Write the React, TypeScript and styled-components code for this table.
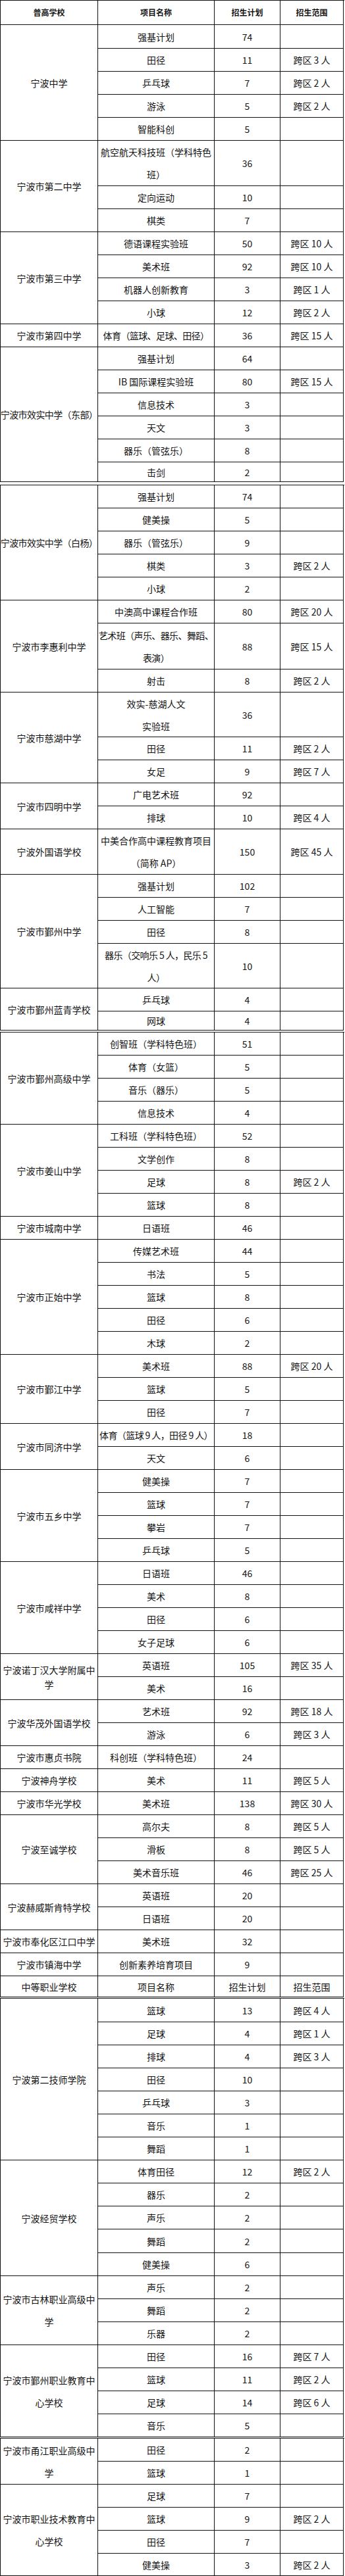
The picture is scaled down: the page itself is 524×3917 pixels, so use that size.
import React from "react";
import styled, { createGlobalStyle } from "styled-components";

type Item = { name: React.ReactNode; plan: string; range?: string; h?: number; tight?: boolean };
type Group = { kind: "group"; school: string; items: Item[]; lh?: number; tight?: boolean };
type Head = { kind: "head"; labels: string[]; bold: boolean; h: number };
type Block = Group | Head;
type Segment = { blocks: Block[]; gap: number };

const g = (school: string, items: Item[], extra: Partial<Group> = {}): Group => ({ kind: "group", school, items, ...extra });
const i = (name: React.ReactNode, plan: string, range?: string, h?: number, tight?: boolean): Item => ({ name, plan, range, h, tight });

const segments: Segment[] = [
  {
    gap: 0,
    blocks: [
      { kind: "head", labels: ["普高学校", "项目名称", "招生计划", "招生范围"], bold: true, h: 37 },
      g("宁波中学", [
        i("强基计划", "74", undefined, 36),
        i("田径", "11", "跨区 3 人"),
        i("乒乓球", "7", "跨区 2 人"),
        i("游泳", "5", "跨区 2 人"),
        i("智能科创", "5"),
      ]),
      g("宁波市第二中学", [
        i(<>航空航天科技班（学科特色<br />班）</>, "36", undefined, 69),
        i("定向运动", "10"),
        i("棋类", "7"),
      ]),
      g("宁波市第三中学", [
        i("德语课程实验班", "50", "跨区 10 人"),
        i("美术班", "92", "跨区 10 人"),
        i("机器人创新教育", "3", "跨区 1 人"),
        i("小球", "12", "跨区 2 人"),
      ]),
      g("宁波市第四中学", [i("体育（篮球、足球、田径）", "36", "跨区 15 人", undefined, true)]),
      g(
        "宁波市效实中学（东部）",
        [
          i("强基计划", "64"),
          i("IB 国际课程实验班", "80", "跨区 15 人"),
          i("信息技术", "3"),
          i("天文", "3"),
          i("器乐（管弦乐）", "8"),
          i("击剑", "2", undefined, 30),
        ],
        { tight: true }
      ),
    ],
  },
  {
    gap: 4,
    blocks: [
      g(
        "宁波市效实中学（白杨）",
        [
          i("强基计划", "74"),
          i("健美操", "5"),
          i("器乐（管弦乐）", "9"),
          i("棋类", "3", "跨区 2 人"),
          i("小球", "2"),
        ],
        { tight: true }
      ),
      g("宁波市李惠利中学", [
        i("中澳高中课程合作班", "80", "跨区 20 人"),
        i(<>艺术班（声乐、器乐、舞蹈、<br />表演）</>, "88", "跨区 15 人", 70, true),
        i("射击", "8", "跨区 2 人"),
      ]),
      g("宁波市慈湖中学", [
        i(<>效实-慈湖人文<br />实验班</>, "36", undefined, 68),
        i("田径", "11", "跨区 2 人"),
        i("女足", "9", "跨区 7 人"),
      ]),
      g("宁波市四明中学", [i("广电艺术班", "92"), i("排球", "10", "跨区 4 人")]),
      g("宁波外国语学校", [
        i(<>中美合作高中课程教育项目<br />（简称 AP）</>, "150", "跨区 45 人", 69),
      ]),
      g("宁波市鄞州中学", [
        i("强基计划", "102"),
        i("人工智能", "7"),
        i("田径", "8"),
        i(<>器乐（交响乐 5 人，民乐 5<br />人）</>, "10", undefined, 68, true),
      ]),
      g("宁波市鄞州蓝青学校", [i("乒乓球", "4"), i("网球", "4", undefined, 29)]),
    ],
  },
  {
    gap: 2,
    blocks: [
      g("宁波市鄞州高级中学", [
        i("创智班（学科特色班）", "51"),
        i("体育（女篮）", "5"),
        i("音乐（器乐）", "5"),
        i("信息技术", "4"),
      ]),
      g("宁波市姜山中学", [
        i("工科班（学科特色班）", "52"),
        i("文学创作", "8"),
        i("足球", "8", "跨区 2 人"),
        i("篮球", "8"),
      ]),
      g("宁波市城南中学", [i("日语班", "46")]),
      g("宁波市正始中学", [
        i("传媒艺术班", "44"),
        i("书法", "5"),
        i("篮球", "8"),
        i("田径", "6"),
        i("木球", "2"),
      ]),
      g("宁波市鄞江中学", [i("美术班", "88", "跨区 20 人"), i("篮球", "5"), i("田径", "7")]),
      g("宁波市同济中学", [
        i("体育（篮球 9 人，田径 9 人）", "18", undefined, undefined, true),
        i("天文", "6"),
      ]),
      g("宁波市五乡中学", [i("健美操", "7"), i("篮球", "7"), i("攀岩", "7"), i("乒乓球", "5")]),
      g("宁波市咸祥中学", [i("日语班", "46"), i("美术", "8"), i("田径", "6"), i("女子足球", "6")]),
      g("宁波诺丁汉大学附属中学", [i("英语班", "105", "跨区 35 人"), i("美术", "16")], { lh: 22 }),
      g("宁波华茂外国语学校", [i("艺术班", "92", "跨区 18 人"), i("游泳", "6", "跨区 3 人")]),
      g("宁波市惠贞书院", [i("科创班（学科特色班）", "24")]),
      g("宁波神舟学校", [i("美术", "11", "跨区 5 人")]),
      g("宁波市华光学校", [i("美术班", "138", "跨区 30 人")]),
      g("宁波至诚学校", [
        i("高尔夫", "8", "跨区 5 人"),
        i("滑板", "8", "跨区 5 人"),
        i("美术音乐班", "46", "跨区 25 人"),
      ]),
      g("宁波赫威斯肯特学校", [i("英语班", "20"), i("日语班", "20")]),
      g("宁波市奉化区江口中学", [i("美术班", "32")]),
      g("宁波市镇海中学", [i("创新素养培育项目", "9")]),
      { kind: "head", labels: ["中等职业学校", "项目名称", "招生计划", "招生范围"], bold: false, h: 32 },
    ],
  },
  {
    gap: 1,
    blocks: [
      g("宁波第二技师学院", [
        i("篮球", "13", "跨区 4 人", 36),
        i("足球", "4", "跨区 1 人"),
        i("排球", "4", "跨区 3 人"),
        i("田径", "10"),
        i("乒乓球", "3"),
        i("音乐", "1"),
        i("舞蹈", "1"),
      ]),
      g("宁波经贸学校", [
        i("体育田径", "12", "跨区 2 人"),
        i("器乐", "2"),
        i("声乐", "2"),
        i("舞蹈", "2", undefined, 36),
        i("健美操", "6"),
      ]),
      g("宁波市古林职业高级中学", [i("声乐", "2"), i("舞蹈", "2"), i("乐器", "2")]),
      g("宁波市鄞州职业教育中心学校", [
        i("田径", "16", "跨区 7 人"),
        i("篮球", "11", "跨区 2 人"),
        i("足球", "14", "跨区 6 人"),
        i("音乐", "5"),
      ]),
    ],
  },
  {
    gap: 1,
    blocks: [
      g("宁波市甬江职业高级中学", [i("田径", "2"), i("篮球", "1")]),
      g("宁波市职业技术教育中心学校", [
        i("足球", "7"),
        i("篮球", "9", "跨区 2 人"),
        i("田径", "7"),
        i("健美操", "3", "跨区 2 人", 34),
      ]),
    ],
  },
];

const GlobalStyle = createGlobalStyle`
  html, body {
    margin: 0;
    padding: 0;
    background: #fff;
  }
  body {
    font-family: "Noto Sans CJK SC", "Noto Sans", sans-serif;
    color: #141414;
  }
`;

const Page = styled.div`
  width: 524px;
  display: flex;
  flex-direction: column;
`;

const Sheet = styled.div<{ $rows: string; $gap: number }>`
  display: grid;
  grid-template-columns: 148px 177px 100px 96px;
  grid-template-rows: ${(p) => p.$rows};
  width: 522px;
  margin-top: ${(p) => p.$gap}px;
  border-top: 1px solid #111;
  border-left: 1px solid #111;
`;

const Cell = styled.div<{ $col: number; $row: number; $span?: number; $lh?: number; $tight?: boolean; $bold?: boolean; $small?: boolean }>`
  grid-column: ${(p) => p.$col};
  grid-row: ${(p) => p.$row} / span ${(p) => p.$span ?? 1};
  box-sizing: border-box;
  border-right: 1px solid #111;
  border-bottom: 1px solid #111;
  display: flex;
  align-items: center;
  justify-content: center;
  text-align: center;
  padding: 0 2px;
  font-size: ${(p) => (p.$small ? 12 : 14)}px;
  font-weight: ${(p) => (p.$bold ? 700 : 400)};
  line-height: ${(p) => p.$lh ?? 34}px;
  white-space: ${(p) => (p.$tight ? "nowrap" : "normal")};
  letter-spacing: ${(p) => (p.$tight ? "-0.6px" : "0")};
  overflow: visible;
`;

function SegmentView({ seg }: { seg: Segment }) {
  const heights: number[] = [];
  const cells: React.ReactNode[] = [];
  let row = 1;
  seg.blocks.forEach((b, bi) => {
    if (b.kind === "head") {
      heights.push(b.h);
      b.labels.forEach((l, li) =>
        cells.push(
          <Cell key={`h${bi}-${li}`} $col={li + 1} $row={row} $bold={b.bold} $small={b.bold}>
            {l}
          </Cell>
        )
      );
      row += 1;
      return;
    }
    cells.push(
      <Cell key={`s${bi}`} $col={1} $row={row} $span={b.items.length} $lh={b.lh} $tight={b.tight}>
        {b.school}
      </Cell>
    );
    b.items.forEach((it, ii) => {
      heights.push(it.h ?? 35);
      const r = row + ii;
      cells.push(
        <Cell key={`n${bi}-${ii}`} $col={2} $row={r} $tight={it.tight}>
          {it.name}
        </Cell>,
        <Cell key={`p${bi}-${ii}`} $col={3} $row={r}>
          {it.plan}
        </Cell>,
        <Cell key={`r${bi}-${ii}`} $col={4} $row={r}>
          {it.range ?? ""}
        </Cell>
      );
    });
    row += b.items.length;
  });
  return (
    <Sheet $rows={heights.map((h) => `${h}px`).join(" ")} $gap={seg.gap}>
      {cells}
    </Sheet>
  );
}

export default function App() {
  return (
    <Page>
      <GlobalStyle />
      {segments.map((s, idx) => (
        <SegmentView key={idx} seg={s} />
      ))}
    </Page>
  );
}
